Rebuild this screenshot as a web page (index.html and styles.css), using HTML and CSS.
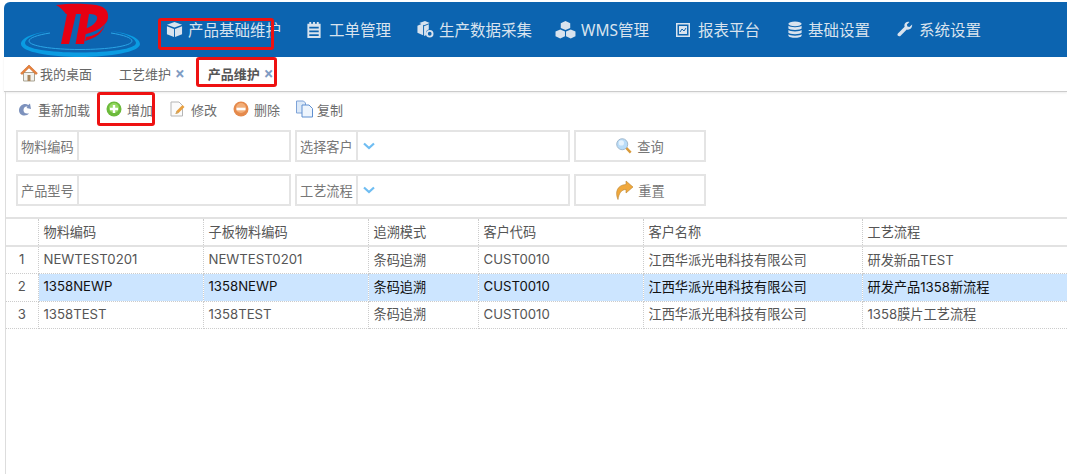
FILE: index.html
```html
<!DOCTYPE html>
<html lang="zh">
<head>
<meta charset="utf-8">
<title>产品维护</title>
<link rel="stylesheet" href="styles.css">
</head>
<body>
<div class="page">
  <header class="topbar">
    <svg class="logo" viewBox="20 3 120 54" width="120" height="54">
      <path fill="#0a9ce2" d="M50 31C33 33 21 38 21 44C21 52 50 57 80 57C110 57 140 52 140 44C140 38 128 33 111 31C124 33 136 38 136 43C136 49 110 52.500 80 52.500C50 52.500 25 49 25 43C25 38 36 33 50 31Z"/>
      <path fill="none" stroke="#2aa5e6" stroke-width="1" d="M50 33C37 35 29 38 29 41C29 46 52 49.500 80 49.500S132 46 132 41C132 38 124 35 111 33"/>
      <path fill="#e60012" d="M56 5C68 3.500 82 3.500 92 4.500C104 5.500 109 10 108 18C107 26 96 32 82 35L81 30C89 28 96 24 97 19C98 15 94 14 88 14L66 14C63 10 60 7 56 5Z"/>
      <path fill="#e60012" d="M67 14L76 14L69 44L61 44Z"/>
      <path fill="#e60012" d="M81 14L89 14L84 44L75.500 44Z"/>
      <path fill="#e60012" d="M86 37C94 36 102 32 105 24C103 33 96 38 85 41Z"/>
    </svg>
    <nav class="nav">
      <a class="nav-item">
        <svg class="nav-icon i-cube" viewBox="0 0 18 18"><path d="M9 1l8 3-8 3-8-3z"/><path d="M1 5.500l7.500 3V17L1 14z"/><path d="M9.500 8.500l7.500-3V14l-7.500 3z"/></svg>
        <span>产品基础维护</span><i class="mark mark-nav"></i>
      </a>
      <a class="nav-item">
        <svg class="nav-icon i-list" viewBox="0 0 16 18"><path fill-rule="evenodd" d="M1 3h2V1h2v2h2V1h2v2h2V1h2v2h2v15H1zM3 6v2h10V6zm0 4v2h10v-2zm0 4v2h10v-2z"/></svg>
        <span>工单管理</span>
      </a>
      <a class="nav-item">
        <svg class="nav-icon i-box" viewBox="0 0 18 18"><path d="M1 5l6-2.500V15L1 12.500z"/><path d="M8 5.500l5-2V9a4 4 0 0 0-3 4v2l-2 1z"/><path d="M3 2l6-2 5 2-6 2.500z"/><circle cx="14" cy="13.500" r="3" fill="none" stroke="#d9e3ee" stroke-width="2"/></svg>
        <span>生产数据采集</span>
      </a>
      <a class="nav-item">
        <svg class="nav-icon i-wms" viewBox="0 0 20 18"><path d="M10 1l4.500 2v4.500L10 9.500 5.500 7.500V3z"/><path d="M5 9l4.500 2v4.500L5 17.500.5 15.500V11z"/><path d="M15 9l4.500 2v4.500L15 17.500l-4.500-2V11z"/></svg>
        <span>WMS管理</span>
      </a>
      <a class="nav-item item-chart">
        <svg class="nav-icon i-chart" viewBox="0 0 14 14"><path fill-rule="evenodd" d="M0 0h14v14H0zM1.500 1.500v11h11v-11zM3 3h8v8H3z"/><path fill="none" stroke="#0c64b0" stroke-width="1" d="M4 9l2-3 2 2 2-3"/></svg>
        <span>报表平台</span>
      </a>
      <a class="nav-item item-db">
        <svg class="nav-icon i-db" viewBox="0 0 14 18"><ellipse cx="7" cy="3" rx="7" ry="2.500"/><path d="M0 5c1 2 13 2 14 0v3c-1 2-13 2-14 0z"/><path d="M0 9.500c1 2 13 2 14 0v3c-1 2-13 2-14 0z"/><path d="M0 14c1 2 13 2 14 0v1.500c-1 3-13 3-14 0z"/></svg>
        <span>基础设置</span>
      </a>
      <a class="nav-item item-wrench">
        <svg class="nav-icon i-wrench" viewBox="0 0 18 18"><path d="M17 3.500l-3 2.800-2.300-.6-.6-2.200L14 .6c-2.500-.9-5.500.6-5.700 3.400 0 .8.100 1.400.3 2L1 13.500c-1.300 1.400.2 4 2.500 3L11 9c3 1 6.500-1.500 6-5.500z"/></svg>
        <span>系统设置</span>
      </a>
    </nav>
  </header>

  <div class="tabs">
    <a class="tab tab-home">
      <svg class="tab-icon" viewBox="0 0 18 18"><path fill="#f1f1ee" stroke="#a9a392" d="M3.500 8.500h11v8.500h-11z"/><path fill="#a8845a" d="M7.500 11h3v6h-3z"/><path fill="#e8843a" stroke="#c9622a" stroke-width=".6" d="M9 1L.6 9.200l1.400 1.300L9 3.800l7 6.700 1.400-1.300z"/></svg>
      <span>我的桌面</span>
    </a>
    <a class="tab">工艺维护<b class="close">×</b></a>
    <a class="tab tab-active">产品维护<b class="close">×</b><i class="mark mark-tab"></i></a>
  </div>

  <main class="content">
    <div class="toolbar">
      <a class="tool">
        <svg class="tool-icon" viewBox="0 0 16 16"><path fill="#7d92bd" d="M13 2.500l1 5.500-4.500-1 1-1.200C8.500 5 6.500 6.800 6.500 9.300c0 2.600 2.500 4 5.500 3C10 15.800 2 15.500 2 9.300 2 4.500 7.500 1.500 11.300 4z"/></svg>
        <span>重新加载</span>
      </a>
      <a class="tool">
        <svg class="tool-icon" viewBox="0 0 16 16"><circle cx="8" cy="8" r="7.500" fill="#6cba3c"/><circle cx="8" cy="7" r="5" fill="#96d862"/><path fill="#fff" d="M6.800 4h2.400v2.800H12v2.400H9.200V12H6.800V9.200H4V6.800h2.800z"/></svg>
        <span>增加</span><i class="mark mark-tool"></i>
      </a>
      <a class="tool">
        <svg class="tool-icon tool-edit" viewBox="0 0 16 16"><path fill="#fbfbfb" stroke="#b5b5b5" d="M1.500 1h8l3.500 3.500V15H1.500z"/><path fill="#e8a040" d="M6 13l1-3 6-6 2 2-6 6z"/><path fill="#c9a870" d="M6 13l1-3 2 2z"/></svg>
        <span>修改</span>
      </a>
      <a class="tool">
        <svg class="tool-icon" viewBox="0 0 16 16"><circle cx="8" cy="8" r="7.500" fill="#e58a4c"/><circle cx="8" cy="7" r="5" fill="#f3ae78"/><path fill="#fff" d="M3.500 6.700h9v2.600h-9z"/></svg>
        <span>删除</span>
      </a>
      <a class="tool tool-copy">
        <svg class="tool-icon tool-icon-copy" viewBox="0 0 18 18"><path fill="#dce9f8" stroke="#7ea3d8" d="M.5 1h7l2 2v10h-9z"/><path fill="#eef5fd" stroke="#5f8fd0" d="M6 5h7l3.500 3.500V17H6z"/></svg>
        <span>复制</span>
      </a>
    </div>

    <form class="filters">
      <div class="field"><label>物料编码</label><div class="value"></div></div>
      <div class="field"><label>选择客户</label><div class="value"><svg class="chev" viewBox="0 0 12 8"><path fill="none" stroke="#6fbdf2" stroke-width="2.200" d="M1 1.500l5 4.500 5-4.500"/></svg></div></div>
      <a class="btn">
        <svg class="btn-icon" viewBox="0 0 18 18"><path fill="#d99a3a" d="M10.500 12l2-2 5 5.500-2 2z"/><circle cx="7" cy="7" r="6.200" fill="#b9dcf8" stroke="#9bb2c8"/><circle cx="6" cy="5.500" r="3" fill="#e6f3fd"/></svg>
        <span>查询</span>
      </a>
      <div class="field"><label>产品型号</label><div class="value"></div></div>
      <div class="field"><label>工艺流程</label><div class="value"><svg class="chev" viewBox="0 0 12 8"><path fill="none" stroke="#6fbdf2" stroke-width="2.200" d="M1 1.500l5 4.500 5-4.500"/></svg></div></div>
      <a class="btn">
        <svg class="btn-icon btn-icon-tall" viewBox="0 0 18 20"><path fill="#f0a83c" stroke="#b98434" stroke-width=".6" d="M11 1l7 6-7 6V9.500C6.500 9.500 4 13 3 19.500 0 13 1.500 5 11 4.500z"/></svg>
        <span>重置</span>
      </a>
    </form>

    <table class="grid">
      <colgroup><col class="c-num"><col class="c-code"><col class="c-code"><col class="c-mode"><col class="c-code"><col class="c-name"><col></colgroup>
      <thead>
        <tr><th></th><th>物料编码</th><th>子板物料编码</th><th>追溯模式</th><th>客户代码</th><th>客户名称</th><th>工艺流程</th></tr>
      </thead>
      <tbody>
        <tr><td class="num">1</td><td>NEWTEST0201</td><td>NEWTEST0201</td><td>条码追溯</td><td>CUST0010</td><td>江西华派光电科技有限公司</td><td>研发新品TEST</td></tr>
        <tr class="selected"><td class="num">2</td><td>1358NEWP</td><td>1358NEWP</td><td>条码追溯</td><td>CUST0010</td><td>江西华派光电科技有限公司</td><td>研发产品1358新流程</td></tr>
        <tr><td class="num">3</td><td>1358TEST</td><td>1358TEST</td><td>条码追溯</td><td>CUST0010</td><td>江西华派光电科技有限公司</td><td>1358膜片工艺流程</td></tr>
      </tbody>
    </table>
  </main>
</div>
</body>
</html>
```

FILE: styles.css
```css
* { box-sizing: border-box; }
html, body { margin: 0; height: 100%; background: #fff; overflow: hidden; }
body { font-family: "Noto Sans", "Noto Sans CJK SC", sans-serif; font-size: 13px; color: #666; }
a { color: inherit; text-decoration: none; }
.page { display: flex; flex-direction: column; height: 474px; padding: 2px 0 0 4px; }

.topbar { display: flex; align-items: stretch; height: 55px; flex: none; background: #0c64b0; border-radius: 6px 0 0 0; padding-left: 16px; }
.logo { flex: none; align-self: flex-end; display: block; }
.nav { display: flex; align-items: center; gap: 25px; margin-left: 26px; color: #d9e3ee; font-size: 15.500px; }
.nav-item { position: relative; display: flex; align-items: center; gap: 6px; line-height: 20px; white-space: nowrap; }
.nav-icon { height: 17px; flex: none; fill: #d9e3ee; }
.i-cube { width: 17px; margin-right: -1px; }
.i-list { width: 16px; margin-right: 1px; }
.i-box { width: 18px; margin-right: -1px; }
.i-wms { width: 21px; height: 19px; margin: 0 -1px 0 -2px; }
.i-chart { width: 14px; height: 14px; margin-right: 2px; }
.i-db { width: 14px; }
.i-wrench { width: 16px; }
.item-chart { margin-left: 2px; }
.item-db { margin-left: 3px; }
.item-wrench { margin-left: 2px; }

.tabs { display: flex; height: 35px; flex: none; padding: 0 0 2px 16px; gap: 23px; align-items: center; border-bottom: 1px solid #ccc; box-shadow: 0 1px 2px rgba(0,0,0,.08); }
.tab { position: relative; display: flex; align-items: center; color: #666; white-space: nowrap; }
.tab-home { gap: 2px; margin-right: 4px; }
.tab-icon { width: 18px; height: 18px; }
.tab-active { font-weight: 700; color: #555; }
.close { margin-left: 4px; color: #7f9cc4; font-size: 17px; line-height: 13px; font-weight: 700; }

.mark { position: absolute; border: 3px solid #ee1111; border-radius: 3px; pointer-events: none; }
.mark-nav { left: -8px; top: -2px; width: 116px; height: 32px; }
.mark-tab { left: -12px; top: -7px; width: 81px; height: 30px; }
.mark-tool { left: -9px; top: -8px; width: 58px; height: 34px; }

.content { flex: 1; margin-left: 1px; border-left: 1px solid #ddd; display: flex; flex-direction: column; min-width: 0; }
.toolbar { display: flex; align-items: center; height: 37px; flex: none; padding: 0 0 3px 11px; gap: 16px; color: #6b6b6b; }
.tool { position: relative; display: flex; align-items: center; gap: 5px; white-space: nowrap; }
.tool-icon { width: 16px; height: 16px; flex: none; }
.tool-edit { width: 17px; }
.tool-icon-copy { width: 18px; height: 18px; }
.tool-copy { gap: 3px; }

.filters { display: grid; grid-template-columns: 275px 275px 132px; grid-auto-rows: 32px; column-gap: 4px; row-gap: 12px; padding-left: 10px; flex: none; margin-top: 1px; font-size: 13.200px; }
.field { display: flex; border: 2px solid #e4e4e4; }
.field label { width: 61px; flex: none; border-right: 2px solid #e4e4e4; padding-left: 3px; line-height: 29px; padding-top: 1px; color: #777; white-space: nowrap; }
.value { flex: 1; display: flex; align-items: center; padding-left: 5px; }
.chev { width: 12px; height: 8px; }
.btn { display: flex; align-items: center; justify-content: center; gap: 5px; border: 2px solid #e4e4e4; color: #777; }
.btn-icon { width: 16px; height: 16px; }
.btn-icon-tall { width: 18px; height: 20px; }

.grid { border-collapse: collapse; table-layout: fixed; width: 100%; margin-top: 11px; flex: none; color: #555; font-family: Inter, "Noto Sans CJK SC", sans-serif; font-size: 13.200px; }
.c-num { width: 32px; }
.c-code { width: 165px; }
.c-mode { width: 110px; }
.c-name { width: 219px; }
.grid th, .grid td { height: 27.500px; padding: 0 4px 2px 5px; text-align: left; font-weight: 400; white-space: nowrap; overflow: hidden; border-right: 1px dotted #ccc; border-bottom: 1px dotted #ccc; }
.grid th:last-child, .grid td:last-child { border-right: 0; }
.grid thead tr { border-top: 2px solid #e2e2e2; }
.grid th { border-bottom: 2px solid #e2e2e2; height: 28px; }
.grid .num { text-align: center; padding-left: 0; padding-right: 0; }
.selected td { background: #cce5ff; color: #111; }
.selected .num { background: #fff; color: #555; }
```
